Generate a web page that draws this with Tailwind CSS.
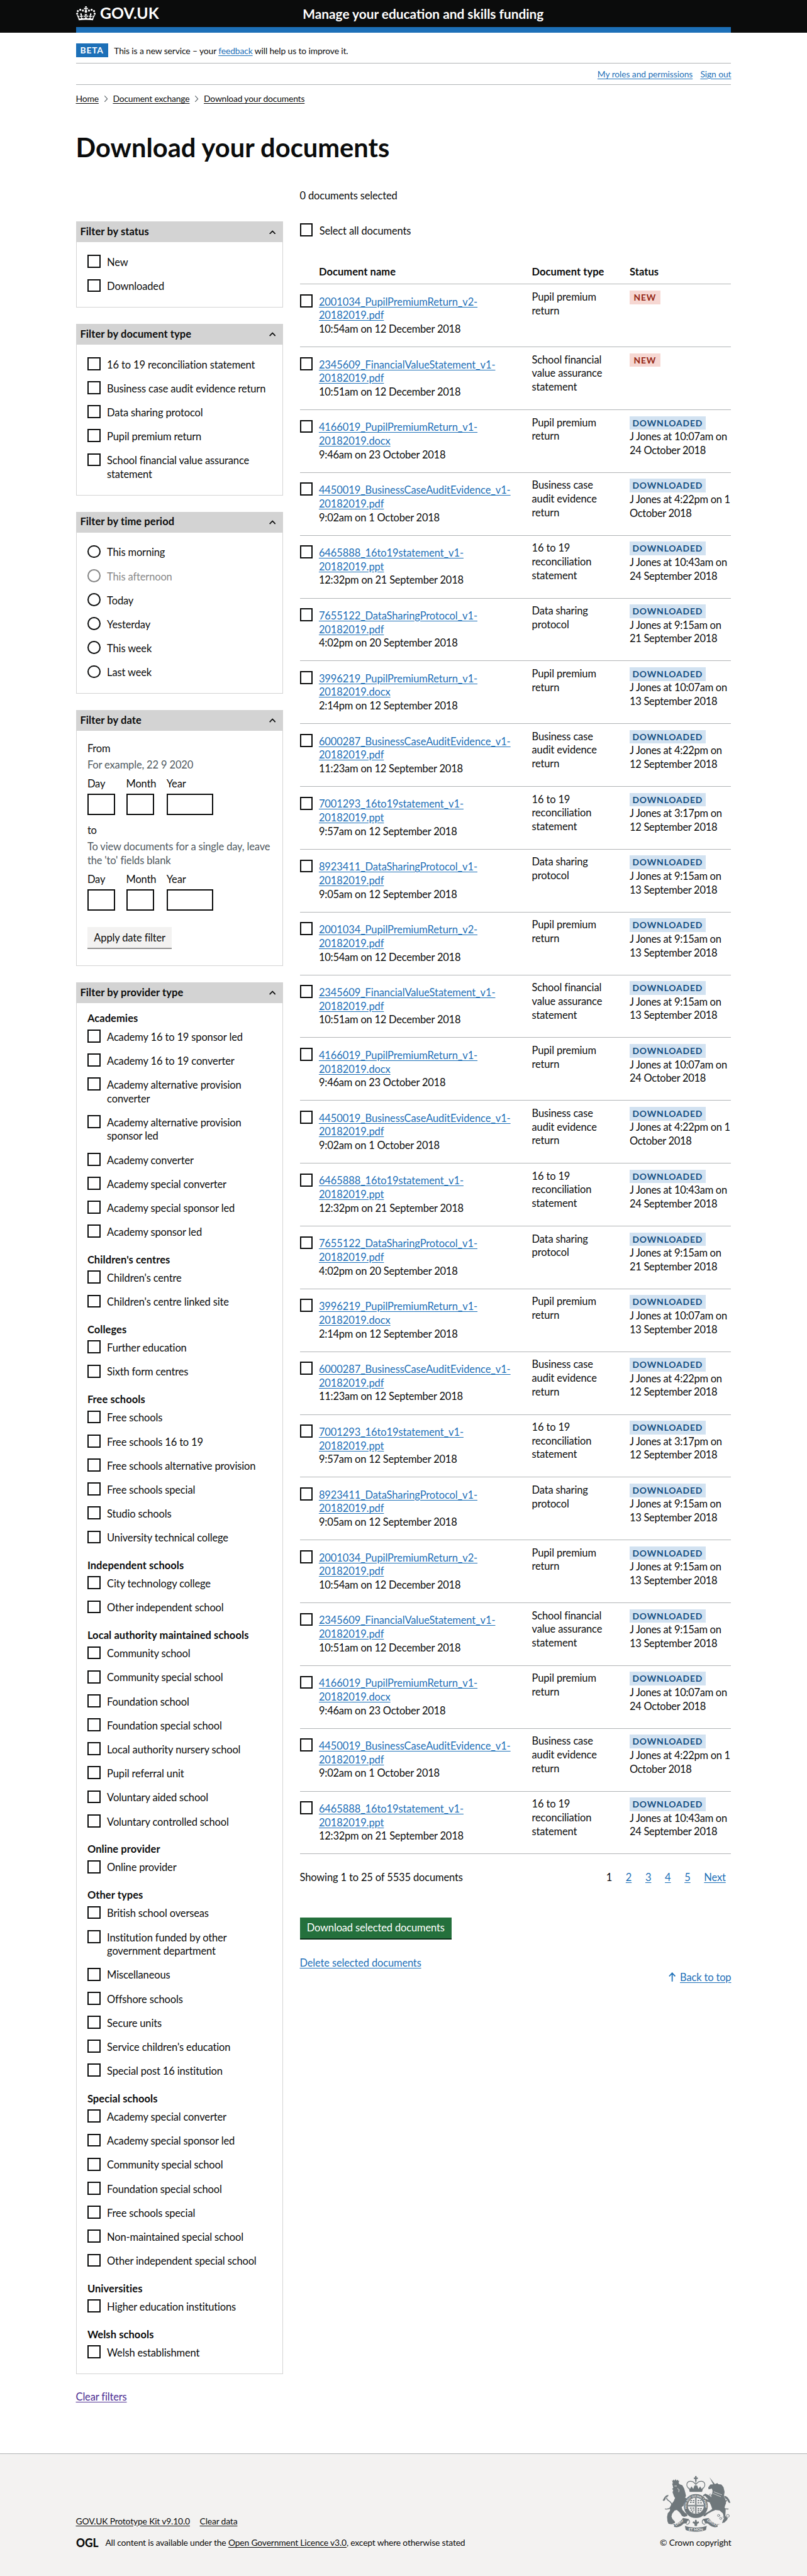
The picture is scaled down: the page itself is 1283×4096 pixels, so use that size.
<!DOCTYPE html>
<html lang="en" class="text-[13.893px]">
<head>
<meta charset="utf-8">
<title>Download your documents</title>
<script src="https://cdn.jsdelivr.net/npm/@tailwindcss/browser@4"></script>
</head>
<body class="flex min-h-screen flex-col bg-white font-[Lato,sans-serif] text-[1.1875rem] leading-6.25 tracking-[-0.009em] text-[#0b0c0c]">

<header class="h-15 bg-[#0b0c0c] text-white">
  <div class="mx-auto flex h-15 w-300 flex-col">
    <div class="flex h-12.5 items-center">
      <a class="flex w-[25.97rem] items-center gap-2">
        <svg class="h-6.5 w-9 shrink-0" viewBox="0 0 132 97" preserveAspectRatio="none"><path fill="currentColor" fill-rule="evenodd" d="M25 30.2c3.5 1.5 7.7-.2 9.1-3.7 1.5-3.6-.2-7.8-3.9-9.2-3.6-1.4-7.6.3-9.1 3.9-1.4 3.5.3 7.5 3.9 9zM9 39.5c3.6 1.5 7.8-.2 9.2-3.7 1.5-3.6-.2-7.8-3.9-9.1-3.6-1.5-7.6.2-9.1 3.8-1.4 3.5.3 7.5 3.8 9zM4.4 57.2c3.5 1.5 7.7-.2 9.1-3.8 1.5-3.6-.2-7.7-3.9-9.1-3.5-1.5-7.6.3-9.1 3.8-1.4 3.5.3 7.6 3.9 9.1zm38.3-21.4c3.5 1.5 7.7-.2 9.1-3.8 1.5-3.6-.2-7.7-3.9-9.1-3.6-1.5-7.6.3-9.1 3.8-1.3 3.6.4 7.7 3.9 9.1zm64.4-5.6c-3.6 1.5-7.8-.2-9.1-3.7-1.5-3.6.2-7.8 3.8-9.2 3.6-1.4 7.7.3 9.2 3.9 1.3 3.5-.4 7.5-3.9 9zm15.9 9.3c-3.6 1.5-7.7-.2-9.1-3.7-1.5-3.6.2-7.8 3.7-9.1 3.6-1.5 7.7.2 9.2 3.8 1.5 3.5-.3 7.5-3.8 9zm4.7 17.7c-3.6 1.5-7.8-.2-9.2-3.8-1.5-3.6.2-7.7 3.9-9.1 3.6-1.5 7.7.3 9.2 3.8 1.3 3.5-.4 7.6-3.9 9.1zM89.3 35.8c-3.6 1.5-7.8-.2-9.2-3.8-1.4-3.6.2-7.7 3.9-9.1 3.6-1.5 7.7.3 9.2 3.8 1.4 3.6-.3 7.7-3.9 9.1zM69.7 17.7l8.9 4.7V9.3l-8.9 2.8c-.2-.3-.5-.6-.9-.9L72.4 0H59.6l3.5 11.2c-.3.3-.6.5-.9.9l-8.8-2.8v13.1l8.8-4.7c.3.3.6.7.9.9l-5 15.4v.1c-.2.8-.4 1.6-.4 2.4 0 4.1 3.1 7.5 7 8.1h.2c.3 0 .7.1 1 .1.4 0 .7 0 1-.1h.2c4-.6 7.1-4.1 7.1-8.1 0-.8-.1-1.7-.4-2.4V34l-5.1-15.4c.4-.2.7-.6 1-.9zM66 92.8c16.9 0 32.8 1.1 47.1 3.2 4-16.9 8.9-26.7 14-33.5l-9.6-3.4c1 4.9 1.1 7.2 0 10.2-1.5-1.4-3-4.3-4.2-8.7L108.6 76c2.8-2 5-3.2 7.5-3.3-4.4 9.4-10 11.9-13.6 11.2-4.3-.8-6.3-4.6-5.6-7.9 1-4.7 5.7-5.9 8-.5 4.3-8.7-3-11.4-7.6-8.8 7.1-7.2 7.9-13.5 2.1-21.1-8 6.1-8.1 12.3-4.5 20.8-4.7-5.4-12.1-2.5-9.5 6.2 3.4-5.2 7.9-2 7.2 3.1-.6 4.3-6.4 7.8-13.5 7.2-10.3-.9-10.9-8-11.2-13.8 2.5-.5 7.1 1.8 11 7.3L80.2 60c-4.1 4.4-8 5.3-12.3 5.4 1.4-4.4 8-11.6 8-11.6H55.5s6.4 7.2 7.9 11.6c-4.2-.1-8-1-12.3-5.4l1.4 16.4c3.9-5.5 8.5-7.7 10.9-7.3-.3 5.8-.9 12.8-11.1 13.8-7.2.6-12.9-2.9-13.5-7.2-.7-5 3.8-8.3 7.1-3.1 2.7-8.7-4.6-11.6-9.4-6.2 3.7-8.5 3.6-14.7-4.6-20.8-5.8 7.6-5 13.9 2.2 21.1-4.7-2.6-11.9.1-7.7 8.8 2.3-5.5 7.1-4.2 8.1.5.7 3.3-1.3 7.1-5.7 7.9-3.5.7-9-1.8-13.5-11.2 2.5.1 4.7 1.3 7.5 3.3l-4.7-15.4c-1.2 4.4-2.7 7.2-4.3 8.7-1.1-3-.9-5.3 0-10.2l-9.5 3.4c5 6.9 9.9 16.7 14 33.5 14.8-2.1 30.8-3.2 47.7-3.2z"/></svg>
        <svg class="h-10.5 w-28 shrink-0 tracking-normal" viewBox="0 0 112 42"><text x="0" y="31.5" fill="currentColor" font-size="29" font-weight="700" textLength="108" lengthAdjust="spacingAndGlyphs">GOV.UK</text></svg>
      </a>
      <a class="text-[1.5rem] leading-7.5 font-bold tracking-normal whitespace-nowrap">Manage your education and skills funding</a>
    </div>
    <div class="h-2.5 bg-[#1d70b8]"></div>
  </div>
</header>

<div class="mx-auto w-300">
  <div class="flex h-14 items-start border-b border-[#b1b4b6] pt-5 text-[1rem] leading-6.25 tracking-[-0.009em]">
    <strong class="mr-2.75 flex h-6.25 w-14.75 items-center justify-center bg-[#1d70b8] tracking-[0.06em] text-white">BETA</strong>
    <span class="pt-0.25">This is a new service – your <a class="text-[#1d70b8] underline underline-offset-2">feedback</a> will help us to improve it.</span>
  </div>
  <div class="flex h-10 items-center justify-end gap-3.5 border-b border-[#b1b4b6] text-[1rem] leading-5 tracking-[-0.007em] text-[#1d70b8]">
    <a class="underline underline-offset-2">My roles and permissions</a>
    <a class="underline underline-offset-2">Sign out</a>
  </div>
  <nav class="flex items-center gap-2.25 pt-3.75 text-[1rem] leading-5 tracking-[-0.012em]">
    <a class="underline underline-offset-2">Home</a>
    <svg class="h-3 w-2" viewBox="0 0 8 12" fill="none" stroke="#505a5f" stroke-width="1.2"><path d="M1.5 .5 6.5 6 1.5 11.5"/></svg>
    <a class="underline underline-offset-2">Document exchange</a>
    <svg class="h-3 w-2" viewBox="0 0 8 12" fill="none" stroke="#505a5f" stroke-width="1.2"><path d="M1.5 .5 6.5 6 1.5 11.5"/></svg>
    <a class="underline underline-offset-2">Download your documents</a>
  </nav>
  <h1 class="mt-13.5 text-[3rem] leading-12.5 font-bold tracking-normal">Download your documents</h1>

  <div class="flex items-start gap-7.5">
    <aside class="w-95 shrink-0 pt-27.75">
      <div id="filters" class="flex flex-col gap-7.5"></div>
      <div class="mt-7.75"><a class="text-[#4c2c92] underline underline-offset-2">Clear filters</a></div>
    </aside>

    <main class="w-197.5">
      <p class="mt-13">0 documents selected</p>
      <label class="mt-9.25 flex h-6 items-start gap-3"><span class="size-6 border-2 border-[#0b0c0c]"></span><span class="pt-0.5">Select all documents</span></label>
      <div class="grid h-22 grid-cols-[2.1875rem_24.375rem_11.1875rem_1fr] border-b border-[#b1b4b6] pt-13.25 font-bold tracking-[0.004em]">
        <span></span><span>Document name</span><span>Document type</span><span>Status</span>
      </div>
      <div id="docs"></div>
      <div class="mt-7.75 flex items-start justify-between pr-2.5">
        <span>Showing 1 to 25 of 5535 documents</span>
        <span class="flex gap-6.25"><span>1</span><a class="text-[#1d70b8] underline underline-offset-2">2</a><a class="text-[#1d70b8] underline underline-offset-2">3</a><a class="text-[#1d70b8] underline underline-offset-2">4</a><a class="text-[#1d70b8] underline underline-offset-2">5</a><a class="text-[#1d70b8] underline underline-offset-2">Next</a></span>
      </div>
      <button class="mt-15 flex h-10 w-69.5 items-center justify-center border-b-2 border-[#0e2e19] bg-[#24703c] pt-0.5 text-white">Download selected documents</button>
      <div class="mt-7.75"><a class="text-[#1d70b8] underline underline-offset-2">Delete selected documents</a></div>
      <div class="mt-0.5 flex items-center justify-end gap-2 text-[#1d70b8]">
        <svg class="mb-1 h-4.25 w-3.25" viewBox="0 0 13 17" fill="none" stroke="currentColor" stroke-width="2"><path d="M6.5 17V1.5M1 7.5 6.5 1.5 12 7.5"/></svg>
        <a class="underline underline-offset-2">Back to top</a>
      </div>
    </main>
  </div>
</div>

<footer class="mt-22.5 flex-1 border-t border-[#b1b4b6] bg-[#f3f2f1] text-[1rem] leading-5 tracking-[-0.012em]">
  <div class="mx-auto flex w-300 items-start justify-between">
    <div class="pt-28">
      <div class="flex gap-4.5"><a class="underline underline-offset-2">GOV.UK Prototype Kit v9.10.0</a><a class="underline underline-offset-2">Clear data</a></div>
      <div class="mt-5 flex items-center">
        <svg class="-my-1.25 mr-2.5 h-7.5 w-11 shrink-0 tracking-normal" viewBox="0 0 44 30"><text x="0" y="22.5" fill="currentColor" font-size="22.5" font-weight="900" textLength="41" lengthAdjust="spacingAndGlyphs">OGL</text></svg>
        <span>All content is available under the <a class="underline underline-offset-2">Open Government Licence v3.0</a>, except where otherwise stated</span>
      </div>
    </div>
    <div class="flex flex-col items-end pt-10">
      <!-- Royal coat of arms -->
      <svg class="h-25.5 w-31.5 tracking-normal" viewBox="153 135 376 306" fill="none" stroke="#6f777b" stroke-linecap="round" stroke-linejoin="round">
        <g fill="#6f777b" stroke="none">
          <!-- lion -->
          <path d="M206 176l36-2 4 6 16 6 10 18 6 22 4 18-6 14-8 14 4 12-4 14-10 8 4 14 14 16 10 6 4 12-18 6-12-6-12-18-16-14-12 2-14 18-4 16 6 14 12 12 2 8-20 8-16-2-6-14-2-24 4-20 12-14 0-20 8-16 12-16 8-18-6-10-8-22 4-10-6-8 6-6z"/>
          <path d="M205 158l5 4 4-8 6 7 5-10 5 10 7-6 3 8 5-3-5 18-28 2z"/>
          <path d="M262 268l14-14 10 4 2 14-10 12-16 6-10-8zM186 240c-12-2-22 8-32 30 14 6 16-10 18-18 6 0 12-4 14-12z"/>
          <!-- unicorn -->
          <path d="M411 142l30 38-8 4zM440 180l14-6 6 6 16 2 12 14 6 26-4 24 10 20 2 18-6 16-2 10 6 10-2 34 14 14-6 10-12 12-14 4 4-14 8-14-8-26-18-16-22-2-20 8-22 12-16 14-10 0 8-14 22-12 20-14-6-18-8-18-14-4-12-10 4-6 16 6-20-22-8 4-2-8 12-8 18 8 14 12 6-20 2-16-4-12-18 4-2-10 12-16z"/>
          <path d="M490 244c18 0 28 14 36 38-14 4-14-10-16-18-8 0-16-8-20-20z"/>
          <!-- crown -->
          <path d="M332 135h8v9h7v7h-7v14h-8v-14h-7v-7h7zM296 196l8 10 8-14 10 14 6-18h16l6 18 10-14 8 14 10-10-8 26h-68z"/>
          <!-- ribbons -->
          <path d="M192 398c34 8 54-8 74-32 10 4 20 2 32 6-8 14-16 18-10 24l-18 0c-20 20-36 24-54 18l2-10zM480 398c-34 8-54-8-74-32-10 4-20 2-32 6 8 14 16 18 10 24l18 0c20 20 36 24 54 18l-2-10zM276 408c20 14 100 14 120 0l-4 22c-20 14-92 14-112 0z"/>
          <path d="M332 376h8l2 12 8-4 4 8-10 6-2 12h-12l-2-12-10-6 4-8 8 4z"/>
          <circle cx="336" cy="300" r="66"/>
        </g>
        <circle cx="336" cy="298" r="44" fill="#f3f2f1" stroke="none"/>
        <g stroke-width="9" stroke="#8b9295"><path d="M336 256v84M294 298h84"/></g>
        <g stroke-width="6" stroke-dasharray="9 5" stroke-linecap="butt"><path d="M306 270h22M304 280h24M346 270h20M346 282h24M346 314h24M346 324h20M346 334h12M304 312h24M308 322h20M314 332h14"/></g>
        <g stroke-width="4">
          <path d="M298 204c-18-14-14-38 6-40 14-1 22 4 28 14M374 204c18-14 14-38-6-40-14-1-22 4-28 14M336 166v22"/>
          <path d="M168 316c24 4 40-10 34-30-4-14-28-18-26-30M514 316c-20 2-36-8-28-26 6-14 26-18 24-30" stroke-width="5"/>
          <path d="M286 374c20 0 20 24 0 28M386 374c-20 0-20 24 0 28"/>
        </g>
        <g stroke-width="3"><circle cx="484" cy="290" r="6"/><circle cx="461" cy="352" r="6"/><circle cx="473" cy="368" r="6"/><circle cx="492" cy="360" r="6"/><circle cx="512" cy="354" r="8"/><circle cx="416" cy="240" r="6"/><circle cx="404" cy="252" r="5"/></g>
        <g stroke="#f3f2f1" stroke-width="3"><path d="M432 232l44 18M436 222l42 16" stroke-dasharray="4 4"/><path d="M236 204l8 6-2 12M220 190h10"/></g>
        <g fill="#f3f2f1" stroke="none" font-weight="700" font-size="19">
          <path id="garter" d="M288 318A51 51 0 1 1 384 318" fill="none"/>
          <text font-size="14"><textPath href="#garter" startOffset="4" textLength="182" lengthAdjust="spacingAndGlyphs">HONI SOIT QUI MAL Y PENSE</textPath></text>
          <text x="296" y="434" textLength="80" lengthAdjust="spacingAndGlyphs">ET MON</text>
          <text transform="translate(226 410) rotate(-32)" textLength="50" lengthAdjust="spacingAndGlyphs">DIEU</text>
          <text transform="translate(396 380) rotate(32)" textLength="62" lengthAdjust="spacingAndGlyphs">DROIT</text>
        </g>
      </svg>
      <span class="mt-2.5">© Crown copyright</span>
    </div>
  </div>
</footer>

<script>
const chevron = '<svg class="h-2 w-3" viewBox="0 0 12 8" fill="none" stroke="#0b0c0c" stroke-width="2"><path d="M.8 7 6 1.6 11.2 7"/></svg>';
const panel = (title, body) => `<section class="border border-t-0 border-[#d3d3d3]">
  <h2 class="-mx-px flex h-9.5 items-center justify-between bg-[#d3d3d3] pr-3.5 pl-2 font-bold tracking-[0.005em]">${title}${chevron}</h2>${body}</section>`;
const check = t => `<label class="flex items-start gap-3 pb-4.25"><span class="size-6 shrink-0 border-2 border-[#0b0c0c]"></span><span class="pt-0.5">${t}</span></label>`;
const radio = t => `<label class="flex items-start gap-3 pb-4.25 ${t === 'This afternoon' ? 'opacity-50' : ''}"><span class="size-6 shrink-0 rounded-full border-2 border-[#0b0c0c]"></span><span class="pt-0.5">${t}</span></label>`;
const list = items => `<div class="px-5 pt-5.75 pb-1.75">${items}</div>`;
const field = (t, cls, box) => `<label class="${cls}">${t}<span class="mt-1 block h-10 border-2 border-[#0b0c0c] ${box}"></span></label>`;
const dateRow = `<div class="mt-2.5 flex">${field('Day', 'w-17.75', 'w-12.75')}${field('Month', 'w-18.5', 'w-12.75')}${field('Year', 'w-21.25', 'w-21.25')}</div>`;

const groups = {
  "Academies": ["Academy 16 to 19 sponsor led", "Academy 16 to 19 converter", "Academy alternative provision<br>converter", "Academy alternative provision<br>sponsor led", "Academy converter", "Academy special converter", "Academy special sponsor led", "Academy sponsor led"],
  "Children's centres": ["Children's centre", "Children's centre linked site"],
  "Colleges": ["Further education", "Sixth form centres"],
  "Free schools": ["Free schools", "Free schools 16 to 19", "Free schools alternative provision", "Free schools special", "Studio schools", "University technical college"],
  "Independent schools": ["City technology college", "Other independent school"],
  "Local authority maintained schools": ["Community school", "Community special school", "Foundation school", "Foundation special school", "Local authority nursery school", "Pupil referral unit", "Voluntary aided school", "Voluntary controlled school"],
  "Online provider": ["Online provider"],
  "Other types": ["British school overseas", "Institution funded by other<br>government department", "Miscellaneous", "Offshore schools", "Secure units", "Service children's education", "Special post 16 institution"],
  "Special schools": ["Academy special converter", "Academy special sponsor led", "Community special school", "Foundation special school", "Free schools special", "Non-maintained special school", "Other independent special school"],
  "Universities": ["Higher education institutions"],
  "Welsh schools": ["Welsh establishment"]
};

document.getElementById('filters').innerHTML =
  panel('Filter by status', list(["New", "Downloaded"].map(check).join(''))) +
  panel('Filter by document type', list(["16 to 19 reconciliation statement", "Business case audit evidence return", "Data sharing protocol", "Pupil premium return", "School financial value assurance<br>statement"].map(check).join(''))) +
  panel('Filter by time period', list(["This morning", "This afternoon", "Today", "Yesterday", "This week", "Last week"].map(radio).join(''))) +
  panel('Filter by date', `<div class="px-5 pt-5.25 pb-7.5">
    <p>From</p><p class="mt-1.25 text-[#505a5f]">For example, 22 9 2020</p>${dateRow}
    <p class="mt-4">to</p><p class="mt-1.25 whitespace-nowrap text-[#505a5f]">To view documents for a single day, leave<br>the 'to' fields blank</p>${dateRow}
    <button class="mt-7.5 flex h-10 w-38.75 items-center justify-center border-b-2 border-[#929191] bg-[#f3f2f1] pt-0.5">Apply date filter</button></div>`) +
  panel('Filter by provider type', `<div class="px-5 pt-2 pb-1.75">${Object.entries(groups).map(([g, items]) =>
    `<h3 class="flex h-10 items-center pt-0.25 font-bold tracking-[0.005em] whitespace-nowrap">${g}</h3>${items.map(check).join('')}`).join('')}</div>`);

const P = 'Pupil premium<br>return', S = 'School financial<br>value assurance<br>statement', B = 'Business case<br>audit evidence<br>return', R = '16 to 19<br>reconciliation<br>statement', D = 'Data sharing<br>protocol';
const a10 = ['J Jones at 10:07am on', '24 October 2018'], s10 = ['J Jones at 10:07am on', '13 September 2018'], b1 = ['J Jones at 4:22pm on 1', 'October 2018'], b12 = ['J Jones at 4:22pm on', '12 September 2018'], r24 = ['J Jones at 10:43am on', '24 September 2018'], d21 = ['J Jones at 9:15am on', '21 September 2018'], d13 = ['J Jones at 9:15am on', '13 September 2018'], r12 = ['J Jones at 3:17pm on', '12 September 2018'];
const pupil2 = s => ['2001034_PupilPremiumReturn_v2-', 'pdf', '10:54am on 12 December 2018', P, s];
const fin = s => ['2345609_FinancialValueStatement_v1-', 'pdf', '10:51am on 12 December 2018', S, s];
const rest = [
  ['4166019_PupilPremiumReturn_v1-', 'docx', '9:46am on 23 October 2018', P, a10],
  ['4450019_BusinessCaseAuditEvidence_v1-', 'pdf', '9:02am on 1 October 2018', B, b1],
  ['6465888_16to19statement_v1-', 'ppt', '12:32pm on 21 September 2018', R, r24],
  ['7655122_DataSharingProtocol_v1-', 'pdf', '4:02pm on 20 September 2018', D, d21],
  ['3996219_PupilPremiumReturn_v1-', 'docx', '2:14pm on 12 September 2018', P, s10],
  ['6000287_BusinessCaseAuditEvidence_v1-', 'pdf', '11:23am on 12 September 2018', B, b12],
  ['7001293_16to19statement_v1-', 'ppt', '9:57am on 12 September 2018', R, r12],
  ['8923411_DataSharingProtocol_v1-', 'pdf', '9:05am on 12 September 2018', D, d13]
];
const docs = [pupil2(null), fin(null), ...rest, pupil2(d13), fin(d13), ...rest, pupil2(d13), fin(d13), ...rest.slice(0, 3)];
document.getElementById('docs').innerHTML = docs.map(([n, ext, when, type, st]) => `<div class="grid h-28.75 grid-cols-[2.1875rem_24.375rem_11.1875rem_1fr] items-start border-b border-[#b1b4b6] whitespace-nowrap">
  <span class="mt-4.5 size-6 border-2 border-[#0b0c0c]"></span>
  <div class="mt-5"><a class="tracking-[-0.006em] text-[#1d70b8] underline underline-offset-2">${n}<br>20182019.${ext}</a><br><span class="tracking-[-0.014em]">${when}</span></div>
  <div class="mt-2.75">${type}</div>
  <div class="mt-2.75 tracking-[-0.018em]">${st
    ? `<strong class="mb-0.25 flex h-6.25 w-34.75 items-center justify-center bg-[#d2e2f1] text-[1rem] tracking-[0.06em] text-[#144e81]">DOWNLOADED</strong>${st[0]}<br>${st[1]}`
    : `<strong class="flex h-6.25 w-14 items-center justify-center bg-[#f6d7d2] text-[1rem] tracking-[0.06em] text-[#942514]">NEW</strong>`}</div>
</div>`).join('');
</script>
</body>
</html>
